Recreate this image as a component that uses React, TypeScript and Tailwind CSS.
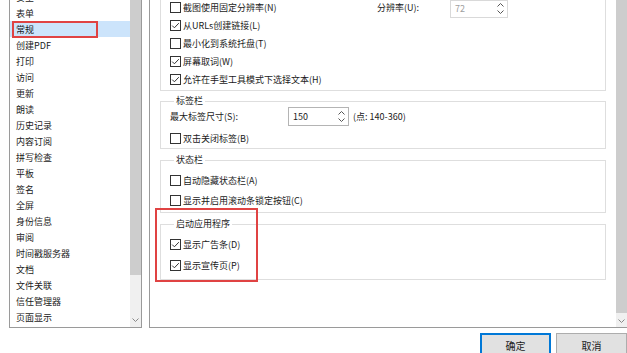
import React from 'react';

const navItems = [
  '安全',
  '表单',
  '常规',
  '创建PDF',
  '打印',
  '访问',
  '更新',
  '朗读',
  '历史记录',
  '内容订阅',
  '拼写检查',
  '平板',
  '签名',
  '全屏',
  '身份信息',
  '审阅',
  '时间戳服务器',
  '文档',
  '文件关联',
  '信任管理器',
  '页面显示',
];

function CheckBox({ checked }: { checked?: boolean }) {
  return (
    <svg width="11" height="11" viewBox="0 0 11 11" className="shrink-0">
      <rect x="0.5" y="0.5" width="10" height="10" fill="#fff" stroke="#333" />
      {checked ? (
        <polyline points="2.2,5.6 4.4,7.8 8.8,3.2" fill="none" stroke="#333" strokeWidth="1" />
      ) : null}
    </svg>
  );
}

function Row({ checked, label, h = 'h-[18px]' }: { checked?: boolean; label: string; h?: string }) {
  return (
    <div className={`flex items-center gap-[2px] ${h}`}>
      <CheckBox checked={checked} />
      <span>{label}</span>
    </div>
  );
}

function Chevron({ up, color = '#606060' }: { up?: boolean; color?: string }) {
  return (
    <svg width="7" height="4" viewBox="0 0 7 4">
      <polyline
        points={up ? '0.5,3.5 3.5,0.5 6.5,3.5' : '0.5,0.5 3.5,3.5 6.5,0.5'}
        fill="none"
        stroke={color}
        strokeWidth="1"
      />
    </svg>
  );
}

function SpinBox({ value, disabled, w }: { value: string; disabled?: boolean; w: string }) {
  return (
    <div
      className={`flex items-center justify-between bg-white pl-[4px] pr-[3px] ${w} border ${
        disabled ? 'border-[#d9d9d9] text-[#a0a0a0]' : 'border-[#b4b4b4] text-[#1a1a1a]'
      }`}
    >
      <span>{value}</span>
      <div className="flex flex-col gap-[3px]">
        <Chevron up color="#555" />
        <Chevron color="#555" />
      </div>
    </div>
  );
}

export default function App() {
  return (
    <div className="relative h-[353px] w-[627px] overflow-hidden bg-white font-['Noto_Sans_CJK_SC','Microsoft_YaHei',sans-serif] text-[9px] leading-none text-[#1a1a1a]">
      <div className="flex h-[328px] pl-[9px]">
        {/* category list */}
        <div className="flex h-[328px] w-[133px] border-x border-b border-[#9a9a9a]">
          <div className="flex-1 overflow-hidden">
            <div className="-mt-[11px] flex flex-col">
              {navItems.map((item) => (
                <div
                  key={item}
                  className={`relative flex h-[16px] items-center pl-[6px] ${
                    item === '常规' ? 'bg-[#cce4fb]' : ''
                  }`}
                >
                  {item}
                  {item === '常规' ? (
                    <span className="absolute left-[2px] top-0 h-[17px] w-[86px] border-2 border-[#e04343]" />
                  ) : null}
                </div>
              ))}
            </div>
          </div>
          <div className="flex w-[11px] flex-col bg-[#f0f0f0]">
            <div className="h-[275px] bg-[#cdcdcd]" />
            <div className="mb-[5px] mt-auto flex justify-center">
              <Chevron color="#888" />
            </div>
          </div>
        </div>

        {/* settings page */}
        <div className="ml-[7px] flex h-[328px] w-[478px] border-b border-l border-[#9a9a9a]">
          <div className="relative w-[456px] overflow-hidden pl-[10px]">
            <fieldset className="-mt-[12px] border border-[#dedede] pb-[2px] pl-[9px] pt-[9px]">
              <div className="flex h-[18px] items-center">
                <div className="w-[207px]">
                  <Row label="截图使用固定分辨率(N)" />
                </div>
                <span className="w-[73px]">分辨率(U):</span>
                <div className="mt-[3px] flex h-[18px]">
                  <SpinBox value="72" disabled w="w-[58px]" />
                </div>
              </div>
              <Row checked label="从URLs创建链接(L)" />
              <Row label="最小化到系统托盘(T)" />
              <Row checked label="屏幕取词(W)" />
              <Row checked label="允许在手型工具模式下选择文本(H)" />
            </fieldset>

            <fieldset className="mt-[4px] border border-[#dedede] pl-[9px]">
              <legend className="ml-[4px] px-[2px] leading-[12px]">标签栏</legend>
              <div className="flex h-[19px] items-stretch">
                <span className="flex w-[118px] items-center">最大标签尺寸(S):</span>
                <SpinBox value="150" w="w-[61px]" />
                <span className="ml-[4px] flex items-center">(点: 140-360)</span>
              </div>
              <div className="mt-[2px]">
                <Row label="双击关闭标签(B)" h="h-[20px]" />
              </div>
            </fieldset>

            <fieldset className="mt-[5px] border border-[#dedede] pb-[2px] pl-[9px] pt-[4px]">
              <legend className="ml-[4px] px-[2px] leading-[12px]">状态栏</legend>
              <Row label="自动隐藏状态栏(A)" h="h-[20px]" />
              <Row label="显示并启用滚动条锁定按钮(C)" h="h-[20px]" />
            </fieldset>

            <fieldset className="mt-[5px] border border-[#dedede] pb-[4px] pl-[9px] pt-[4px]">
              <legend className="ml-[4px] px-[2px] leading-[12px]">启动应用程序</legend>
              <Row checked label="显示广告条(D)" h="h-[20px]" />
              <div className="mt-[1px]">
                <Row checked label="显示宣传页(P)" h="h-[20px]" />
              </div>
            </fieldset>

            {/* annotation */}
            <span className="absolute left-[5px] top-[208px] h-[74px] w-[103px] border-2 border-[#e04343]" />
          </div>
          <div className="ml-[10px] flex w-[11px] flex-col bg-[#f0f0f0]">
            <div className="h-[313px] bg-[#cdcdcd]" />
            <div className="mb-[4px] mt-auto flex justify-center">
              <Chevron color="#888" />
            </div>
          </div>
        </div>
      </div>

      <div className="mt-[5px] flex gap-[5px] pl-[480px] text-[10px]">
        <button className="flex h-[26px] w-[72px] items-center justify-center border-2 border-[#0078d7] bg-[#e1e1e1]">
          确定
        </button>
        <button className="flex h-[26px] w-[72px] items-center justify-center border border-[#adadad] bg-[#e1e1e1]">
          取消
        </button>
      </div>
    </div>
  );
}
